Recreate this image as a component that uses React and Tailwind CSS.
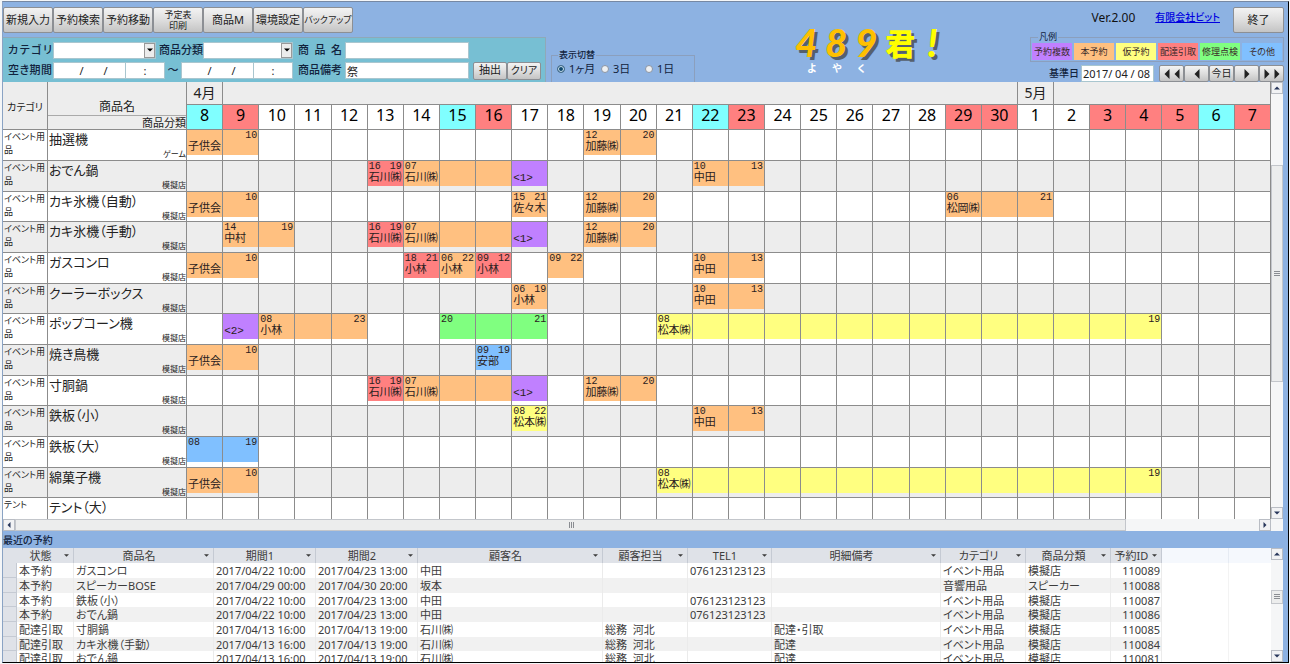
import React, { useState } from 'react';

const COLORS = {
  multi: 'bg-[#c080ff]',
  fixed: 'bg-[#ffc080]',
  tentative: 'bg-[#ffff80]',
  delivery: 'bg-[#ff8080]',
  repair: 'bg-[#80ff80]',
  other: 'bg-[#80c0ff]',
};

const LEGEND = [
  { label: '予約複数', type: 'multi' },
  { label: '本予約', type: 'fixed' },
  { label: '仮予約', type: 'tentative' },
  { label: '配達引取', type: 'delivery' },
  { label: '修理点検', type: 'repair' },
  { label: 'その他', type: 'other' },
];

const SATURDAYS = [0, 7, 14, 28];
const HOLIDAYS = [1, 8, 15, 21, 22, 25, 26, 27, 29];

// index 0 = 4/8, index 29 = 5/7
const DAYS = Array.from({ length: 30 }, (_, i) => (i < 23 ? i + 8 : i - 22));

// [first, last, type, start hour, end hour, customer]
const kodomo = [0, 1, 'fixed', '', '10', '子供会'];
const kato = [11, 12, 'fixed', '12', '20', '加藤㈱'];
const nakata = [14, 15, 'fixed', '10', '13', '中田'];
const matsumoto = [13, 26, 'tentative', '08', '19', '松本㈱'];
const ishikawa = [
  [5, 5, 'delivery', '16', '19', '石川㈱'],
  [6, 8, 'fixed', '07', '', '石川㈱'],
  [9, 9, 'multi', '', '', '<1>'],
];

const ITEMS = [
  { name: '抽選機', kind: 'ゲーム', bookings: [kodomo, kato] },
  { name: 'おでん鍋', kind: '模擬店', bookings: [...ishikawa, nakata] },
  {
    name: 'カキ氷機（自動）',
    kind: '模擬店',
    bookings: [kodomo, [9, 9, 'fixed', '15', '21', '佐々木'], kato, [21, 23, 'fixed', '06', '21', '松岡㈱']],
  },
  { name: 'カキ氷機（手動）', kind: '模擬店', bookings: [[1, 2, 'fixed', '14', '19', '中村'], ...ishikawa, kato] },
  {
    name: 'ガスコンロ',
    kind: '模擬店',
    bookings: [
      kodomo,
      [6, 6, 'delivery', '18', '21', '小林'],
      [7, 7, 'fixed', '06', '22', '小林'],
      [8, 8, 'delivery', '09', '12', '小林'],
      [10, 10, 'fixed', '09', '22', ''],
      nakata,
    ],
  },
  { name: 'クーラーボックス', kind: '模擬店', bookings: [[9, 9, 'fixed', '06', '19', '小林'], nakata] },
  {
    name: 'ポップコーン機',
    kind: '模擬店',
    bookings: [
      [1, 1, 'multi', '', '', '<2>'],
      [2, 4, 'fixed', '08', '23', '小林'],
      [7, 9, 'repair', '20', '21', ''],
      matsumoto,
    ],
  },
  { name: '焼き鳥機', kind: '模擬店', bookings: [kodomo, [8, 8, 'other', '09', '19', '安部']] },
  { name: '寸胴鍋', kind: '模擬店', bookings: [...ishikawa, kato] },
  { name: '鉄板（小）', kind: '模擬店', bookings: [[9, 9, 'tentative', '08', '22', '松本㈱'], nakata] },
  { name: '鉄板（大）', kind: '模擬店', bookings: [[0, 1, 'other', '08', '19', '']] },
  { name: '綿菓子機', kind: '模擬店', bookings: [kodomo, matsumoto] },
  { name: 'テント（大）', category: 'テント', bookings: [] },
];

const RECENT_COLUMNS = [
  { label: '状態', width: 'w-[57px]' },
  { label: '商品名', width: 'w-[140px]' },
  { label: '期間1', width: 'w-[102px]' },
  { label: '期間2', width: 'w-[102px]' },
  { label: '顧客名', width: 'w-[185px]' },
  { label: '顧客担当', width: 'w-[85px]' },
  { label: 'TEL1', width: 'w-[84px]' },
  { label: '明細備考', width: 'w-[169px]' },
  { label: 'カテゴリ', width: 'w-[85px]' },
  { label: '商品分類', width: 'w-[85px]' },
  { label: '予約ID', width: 'w-[51px]' },
];

const RECENT = [
  ['本予約', 'ガスコンロ', '2017/04/22 10:00', '2017/04/23 13:00', '中田', '', '076123123123', '', 'イベント用品', '模擬店', '110089'],
  ['本予約', 'スピーカーBOSE', '2017/04/29 00:00', '2017/04/30 20:00', '坂本', '', '', '', '音響用品', 'スピーカー', '110088'],
  ['本予約', '鉄板（小）', '2017/04/22 10:00', '2017/04/23 13:00', '中田', '', '076123123123', '', 'イベント用品', '模擬店', '110087'],
  ['本予約', 'おでん鍋', '2017/04/22 10:00', '2017/04/23 13:00', '中田', '', '076123123123', '', 'イベント用品', '模擬店', '110086'],
  ['配達引取', '寸胴鍋', '2017/04/13 16:00', '2017/04/13 19:00', '石川㈱', '総務  河北', '', '配達・引取', 'イベント用品', '模擬店', '110085'],
  ['配達引取', 'カキ氷機（手動）', '2017/04/13 16:00', '2017/04/13 19:00', '石川㈱', '総務  河北', '', '配達', 'イベント用品', '模擬店', '110084'],
  ['配達引取', 'おでん鍋', '2017/04/13 16:00', '2017/04/13 19:00', '石川㈱', '総務  河北', '', '配達', 'イベント用品', '模擬店', '110081'],
];

const ARROWS = {
  up: '0,6 8,6 4,2',
  down: '0,2 8,2 4,6',
  left: '6,0 6,8 2,4',
  right: '2,0 2,8 6,4',
};

const Arrow = ({ dir, className = 'size-2' }) => (
  <svg viewBox="0 0 8 8" className={className} fill="currentColor" aria-hidden="true">
    <polygon points={ARROWS[dir]} />
  </svg>
);

const Button = ({ className = '', children, ...rest }) => (
  <button
    type="button"
    className={`flex items-center justify-center whitespace-nowrap rounded-[2px] border border-[#8c8f94] bg-gradient-to-b from-[#f3f3f3] via-[#dedede] to-[#c4c4c4] text-[#222] ${className}`}
    {...rest}
  >
    {children}
  </button>
);

const LABEL = 'w-11 shrink-0 whitespace-nowrap text-[11px] font-medium text-[#12233d] [text-align-last:justify]';
const FIELD = 'h-[17px] min-w-0 bg-white border border-[#a9c6cf] text-[11px] leading-none text-[#222] outline-none';

const ComboBox = ({ id, className }) => (
  <div className={`relative ${className}`}>
    <select id={id} className={`${FIELD} block w-full appearance-none`}>
      <option value=""></option>
    </select>
    <span className="pointer-events-none absolute inset-y-px right-px flex w-[11px] items-center justify-center border border-[#999] bg-[#ececec] text-black">
      <Arrow dir="down" className="size-[6px]" />
    </span>
  </div>
);

const PeriodInput = ({ name }) => (
  <div className="flex w-[112px]">
    <input aria-label={`${name}日付`} defaultValue="/       /" className={`${FIELD} w-[73px] pl-2 text-center`} />
    <input aria-label={`${name}時刻`} defaultValue=":" className={`${FIELD} -ml-px w-10 text-center`} />
  </div>
);

const SearchPanel = () => (
  <div className="mt-1 flex h-[45px] flex-col justify-center gap-[3px] border-r border-t border-[#8fa9b8] bg-[#77bfd3] pl-[5px] pt-px">
    <div className="flex items-center">
      <label htmlFor="category" className={LABEL}>カテゴリ</label>
      <ComboBox id="category" className="ml-px w-[103px]" />
      <label htmlFor="kind" className={`${LABEL} ml-[3px]`}>商品分類</label>
      <ComboBox id="kind" className="w-[90px]" />
      <label htmlFor="item-name" className={`${LABEL} ml-[5px]`}>商品名</label>
      <input id="item-name" className={`${FIELD} ml-[3px] w-[124px] px-px`} />
    </div>
    <div className="flex items-center">
      <span className={LABEL}>空き期間</span>
      <div className="ml-px flex items-center">
        <PeriodInput name="開始" />
        <span className="w-4 text-center text-[11px] font-medium text-[#12233d]">～</span>
        <PeriodInput name="終了" />
      </div>
      <label htmlFor="note" className={`${LABEL} ml-[5px]`}>商品備考</label>
      <input id="note" defaultValue="祭" className={`${FIELD} ml-[3px] w-[124px] px-px`} />
      <div className="ml-1 flex">
        <Button className="h-[18px] w-[34px] text-[11px]">抽出</Button>
        <Button className="h-[18px] w-[34px] text-[10px]">クリア</Button>
      </div>
    </div>
  </div>
);

const ViewSwitch = () => {
  const [view, setView] = useState('1ヶ月');
  return (
    <fieldset className="ml-[5px] w-[140px] self-end border border-b-0 border-[#8b9fbd] px-[5px] pb-[5px] text-[#12233d]">
      <legend className="ml-px px-px text-[9px] font-medium leading-3">表示切替</legend>
      <div className="flex text-[11px] leading-4">
        {['1ヶ月', '3日', '1日'].map((v) => (
          <label key={v} className="flex w-11 items-center gap-1 whitespace-nowrap">
            <input
              type="radio"
              name="view"
              value={v}
              checked={view === v}
              onChange={() => setView(v)}
              className="size-2 shrink-0 appearance-none rounded-full border border-[#8a94a3] bg-[#eef0f2] checked:border-[#4a6f8c] checked:bg-[#10496e] checked:shadow-[inset_0_0_0_1px_#cfe6f5]"
            />
            {v}
          </label>
        ))}
      </div>
    </fieldset>
  );
};

const Logo = () => (
  <div className="flex flex-1 justify-center pl-2 pt-[21px]">
    <div>
      <div className="flex items-center font-['Lato',sans-serif] text-[38px] font-black italic leading-[38px] text-[#ffc000] [text-shadow:3px_3px_0_#55606e]">
        {['4', '8', '9'].map((n) => (
          <span key={n} className="w-[30px]">{n}</span>
        ))}
        <span className="font-['Noto_Sans_CJK_JP',sans-serif] text-[30px] font-black not-italic leading-[34px] text-[#ffff00]">君</span>
        <span className="pl-3 text-[#ffff00]">!</span>
      </div>
      <div className="flex pl-3 pt-px text-[10px] font-bold leading-3 text-white">
        {['よ', 'や', 'く'].map((c) => (
          <span key={c} className="w-[25px]">{c}</span>
        ))}
      </div>
    </div>
  </div>
);

const HeaderRight = () => (
  <div className="mr-1 flex w-[254px] flex-col pt-[5px]">
    <div className="flex justify-end">
      <span className="mt-[3px] text-[12px] leading-4 text-[#111]">Ver.2.00</span>
      <a href="#company" className="ml-5 mr-[13px] mt-[2px] whitespace-nowrap text-[10px] font-medium leading-4 text-[#0000e0] underline">
        有限会社ビット
      </a>
      <Button className="h-[26px] w-[51px] text-[11px]">終了</Button>
    </div>
    <fieldset className="border border-[#8b9fbd] px-px pb-px">
      <legend className="ml-[6px] px-px text-[9px] leading-[8px] text-[#12233d]">凡例</legend>
      <div className="flex gap-[2px] pt-[2px]">
        {LEGEND.map((l) => (
          <span
            key={l.label}
            className={`flex h-[17px] w-10 items-center justify-center whitespace-nowrap text-[9px] text-[#3a2a2a] ${COLORS[l.type]}`}
          >
            {l.label}
          </span>
        ))}
      </div>
    </fieldset>
    <div className="mt-[3px] flex items-center justify-end">
      <label htmlFor="base-date" className="whitespace-nowrap pr-[2px] text-[10px] font-medium text-[#12233d]">基準日</label>
      <input id="base-date" defaultValue="2017/ 04 / 08" className={`${FIELD} w-[73px] px-px`} />
      <div className="ml-[5px] flex text-black">
        <Button aria-label="前月" className="h-[17px] w-[25px]">
          <Arrow dir="left" className="size-[10px]" />
          <Arrow dir="left" className="size-[10px]" />
        </Button>
        <Button aria-label="前日" className="h-[17px] w-[25px]"><Arrow dir="left" className="size-[10px]" /></Button>
        <Button className="h-[17px] w-[25px] text-[10px]">今日</Button>
        <Button aria-label="翌日" className="h-[17px] w-[25px]"><Arrow dir="right" className="size-[10px]" /></Button>
        <Button aria-label="翌月" className="h-[17px] w-[25px]">
          <Arrow dir="right" className="size-[10px]" />
          <Arrow dir="right" className="size-[10px]" />
        </Button>
      </div>
    </div>
  </div>
);

const Header = () => (
  <header className="flex h-20 shrink-0">
    <div className="w-[543px] shrink-0 pt-[5px]">
      <nav className="flex">
        <Button className="h-[26px] w-[50px] text-[11px]">新規入力</Button>
        <Button className="h-[26px] w-[50px] text-[11px]">予約検索</Button>
        <Button className="h-[26px] w-[50px] text-[11px]">予約移動</Button>
        <Button className="h-[26px] w-[50px] text-[9px] leading-[11px]">
          予定表<br />印刷
        </Button>
        <Button className="h-[26px] w-[50px] text-[11px]">商品M</Button>
        <Button className="h-[26px] w-[50px] text-[11px]">環境設定</Button>
        <Button className="h-[26px] w-[50px] text-[9px]">バックアップ</Button>
      </nav>
      <SearchPanel />
    </div>
    <ViewSwitch />
    <Logo />
    <HeaderRight />
  </header>
);

const SCROLL_BUTTON = 'flex size-3 shrink-0 items-center justify-center border border-[#b9bdc4] bg-[#f1f2f4] text-[#27365a]';

const VerticalScroll = ({ children }) => (
  <div className="flex w-3 shrink-0 flex-col bg-[#f5f6f7]">
    <button type="button" aria-label="上へ" className={SCROLL_BUTTON}><Arrow dir="up" className="size-[6px]" /></button>
    {children}
    <button type="button" aria-label="下へ" className={SCROLL_BUTTON}><Arrow dir="down" className="size-[6px]" /></button>
  </div>
);

const THUMB = 'flex items-center justify-center border border-[#c3c6cb] bg-[#eceded]';

const Grip = ({ className }) => (
  <svg viewBox="0 0 6 6" className={`size-[6px] ${className}`} stroke="#8a8d92" aria-hidden="true">
    <path d="M0 .5h6M0 2.5h6M0 4.5h6" />
  </svg>
);

const CELL = 'border-b border-r border-[#8c8c8c] p-0';

const DayCell = ({ day, bookings }) => {
  const b = bookings.find(([from, to]) => day >= from && day <= to);
  if (!b) return <td className={CELL} />;
  const [from, to, type, start, end, customer] = b;
  return (
    <td className={`${CELL} align-top`}>
      <div className={`h-[25px] pl-px pt-px text-[#2a2020] ${COLORS[type]}`}>
        <div className="flex h-[10px] justify-between font-['Liberation_Mono',monospace] text-[10px] leading-[10px]">
          <span>{day === from ? start : ''}</span>
          <span className="pr-px">{day === to ? end : ''}</span>
        </div>
        {day === from && (
          <div className="whitespace-nowrap font-['Liberation_Mono','Noto_Sans_CJK_JP',monospace] text-[11px] leading-[12px]">
            {customer}
          </div>
        )}
      </div>
    </td>
  );
};

const Schedule = () => (
  <section className="mr-[5px] flex shrink-0 flex-col bg-[#f5f6f7]">
    <div className="flex h-[437px]">
      <div className="min-w-0 flex-1 overflow-hidden bg-white">
        <table className="w-full table-fixed border-separate border-spacing-0">
          <colgroup>
            <col className="w-[45px]" />
            <col className="w-[139px]" />
            {DAYS.map((_, i) => <col key={i} />)}
          </colgroup>
          <thead className="bg-[#ededed] text-[#222]">
            <tr className="h-[23px]">
              <th rowSpan={2} className={`${CELL} pt-1 text-[10px] font-normal`}>カテゴリ</th>
              <th rowSpan={2} className={`${CELL} align-bottom font-normal`}>
                <div className="border-b border-[#aaa] text-[12px] leading-4">商品名</div>
                <div className="text-right text-[11px] leading-[13px]">商品分類</div>
              </th>
              <th className={`${CELL} whitespace-nowrap text-[14px] font-normal leading-5`}>4月</th>
              <th colSpan={22} className={CELL} />
              <th className={`${CELL} whitespace-nowrap text-[14px] font-normal leading-5`}>5月</th>
              <th colSpan={6} className={CELL} />
            </tr>
            <tr className="h-[25px]">
              {DAYS.map((d, i) => (
                <th
                  key={i}
                  className={`${CELL} align-top text-[16px] font-normal leading-5 text-black ${
                    SATURDAYS.includes(i) ? 'bg-[#80ffff]' : HOLIDAYS.includes(i) ? 'bg-[#ff8080]' : 'bg-white'
                  }`}
                >
                  {d}
                </th>
              ))}
            </tr>
          </thead>
          <tbody>
            {ITEMS.map((item) => (
              <tr key={item.name} className="h-[31px] even:bg-[#ededed] nth-[3n]:h-[30px]">
                <td className={`${CELL} break-all pl-px align-top text-[9px] leading-[13px] text-[#222]`}>
                  {item.category || 'イベント用品'}
                </td>
                <td className={`${CELL} pl-px align-top text-[#222]`}>
                  <div className="text-[13px] leading-[19px]">{item.name}</div>
                  {item.kind && <div className="text-right text-[8px] leading-[10px]">{item.kind}</div>}
                </td>
                {DAYS.map((_, i) => <DayCell key={i} day={i} bookings={item.bookings} />)}
              </tr>
            ))}
          </tbody>
        </table>
      </div>
      <VerticalScroll>
        <div className="flex-[71]" />
        <div className={`${THUMB} flex-[215]`}><Grip /></div>
        <div className="flex-[125]" />
      </VerticalScroll>
    </div>
    <div className="mr-3 flex h-3">
      <button type="button" aria-label="左へ" className={SCROLL_BUTTON}><Arrow dir="left" className="size-[6px]" /></button>
      <div className={`${THUMB} flex-[1111]`}><Grip className="rotate-90" /></div>
      <div className="flex-[133]" />
      <button type="button" aria-label="右へ" className={SCROLL_BUTTON}><Arrow dir="right" className="size-[6px]" /></button>
    </div>
  </section>
);

const RecentBookings = () => (
  <section className="mr-[5px] flex min-h-0 flex-1 flex-col">
    <h2 className="h-[17px] shrink-0 text-[10px] font-medium leading-[19px] text-[#12233d]">最近の予約</h2>
    <div className="flex min-h-0 flex-1">
      <div className="min-w-0 flex-1 overflow-hidden bg-white">
        <table className="w-full table-fixed border-separate border-spacing-0 text-[11px] leading-[14px] text-[#3c3c3c]">
          <colgroup>
            <col className="w-[14px]" />
            {RECENT_COLUMNS.map((c) => <col key={c.label} className={c.width} />)}
            <col className="w-[67px]" />
            <col />
          </colgroup>
          <thead>
            <tr className="h-[15px]">
              <th className="bg-[#dfe2e8] p-0" />
              {RECENT_COLUMNS.map((c) => (
                <th key={c.label} className="border-r border-[#c5cad3] bg-[#dfe2e8] p-0 font-normal">
                  <div className="flex items-center pr-1">
                    <span className="flex-1 whitespace-nowrap">{c.label}</span>
                    <Arrow dir="down" className="size-[5px]" />
                  </div>
                </th>
              ))}
              <th className="border-r border-[#e6ebf3] bg-[#f5f8fd] p-0" />
              <th className="bg-[#f5f8fd] p-0" />
            </tr>
          </thead>
          <tbody>
            {RECENT.map((row) => (
              <tr key={row[10]} className="group h-[15px] nth-[3n]:h-[14px]">
                <td className="border-b border-r border-[#c5cad3] bg-[#dfe2e8] p-0" />
                {row.map((value, i) => (
                  <td
                    key={i}
                    className={`overflow-hidden whitespace-pre border-r border-[#ebebeb] p-0 pl-[2px] leading-[13px] group-even:bg-[#f1f1f1] ${
                      i === 10 ? 'pr-px text-right' : ''
                    }`}
                  >
                    {value}
                  </td>
                ))}
                <td className="border-r border-[#f3f3f3] p-0" />
                <td className="p-0" />
              </tr>
            ))}
          </tbody>
        </table>
      </div>
      <VerticalScroll>
        <div className="flex-[31]" />
        <div className={`${THUMB} flex-[12]`}><Grip /></div>
        <div className="flex-[47]" />
      </VerticalScroll>
    </div>
  </section>
);

const App = () => (
  <div className="h-screen bg-[#f4f6f8] pb-px pl-[2px] pr-px pt-px font-['Noto_Sans','Noto_Sans_CJK_JP',sans-serif] [font-feature-settings:'palt']">
    <main className="flex h-full flex-col overflow-hidden border border-b-black border-l-[#8aa3c4] border-r-black border-t-[#7688a3] bg-[#8db2e2]">
      <Header />
      <Schedule />
      <RecentBookings />
    </main>
  </div>
);

export default App;
